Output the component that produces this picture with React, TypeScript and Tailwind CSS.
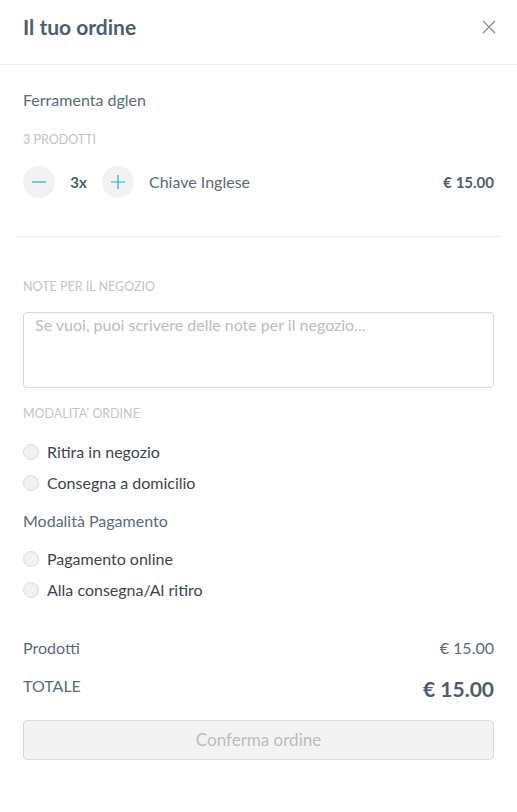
import { useState } from 'react';

const font = { fontFamily: 'Lato, "Open Sans", sans-serif' };

function Radio({ label, checked, onClick }: { label: string; checked: boolean; onClick: () => void }) {
  return (
    <button onClick={onClick} className="flex items-center gap-2 h-[31px] text-left">
      <span className="w-4 h-4 rounded-full border border-[#dcdcdc] bg-[#f0f1f3] shrink-0 flex items-center justify-center">
        {checked && <span className="w-2 h-2 rounded-full bg-[#17b6c9]" />}
      </span>
      <span className="text-[16px] text-[#3d4550]">{label}</span>
    </button>
  );
}

export default function App() {
  const [qty, setQty] = useState(3);
  const [mode, setMode] = useState<string | null>(null);
  const [pay, setPay] = useState<string | null>(null);

  return (
    <div style={font} className="w-[517px] h-[812px] bg-white text-[#5a6a7d]">
      <div className="h-[65px] border-b border-[#ececec] flex items-center justify-between pl-[23px] pr-[20px]">
        <h1 className="text-[21px] font-bold text-[#4d5d70] -mt-[10px]">Il tuo ordine</h1>
        <button className="-mt-[10px]">
          <svg width="16" height="16" viewBox="0 0 16 16" stroke="#8a8a8a" strokeWidth="1.3" fill="none">
            <path d="M2 2L14 14M14 2L2 14" />
          </svg>
        </button>
      </div>

      <div className="px-[23px] pt-[24px]">
        <p className="text-[16px] text-[#5a6a7d] leading-[22px]">Ferramenta dglen</p>
        <p className="mt-[21px] text-[12.5px] text-[#c4c4c4] leading-[16px]">{qty} PRODOTTI</p>
        <div className="mt-[18px] flex items-center h-[32px]">
          <button
            onClick={() => setQty((q) => Math.max(0, q - 1))}
            className="w-8 h-8 rounded-full bg-[#f1f2f4] flex items-center justify-center"
          >
            <svg width="16" height="16" viewBox="0 0 16 16" stroke="#17b6c9" strokeWidth="1.2">
              <path d="M1 8H15" />
            </svg>
          </button>
          <span className="w-[47px] text-center text-[15px] font-bold text-[#4d5d70]">{qty}x</span>
          <button
            onClick={() => setQty((q) => q + 1)}
            className="w-8 h-8 rounded-full bg-[#f1f2f4] flex items-center justify-center"
          >
            <svg width="16" height="16" viewBox="0 0 16 16" stroke="#17b6c9" strokeWidth="1.2">
              <path d="M1 8H15M8 1V15" />
            </svg>
          </button>
          <span className="ml-[15px] text-[16px] text-[#5a6a7d]">Chiave Inglese</span>
          <span className="ml-auto text-[15px] font-bold text-[#4d5d70]">€ 15.00</span>
        </div>
      </div>

      <div className="mx-[16px] mt-[38px] border-t border-[#ececec]" />

      <div className="px-[23px]">
        <p className="mt-[42px] text-[12.5px] text-[#c4c4c4] leading-[16px]">NOTE PER IL NEGOZIO</p>
        <textarea
          placeholder="Se vuoi, puoi scrivere delle note per il negozio..."
          className="mt-[17px] block w-full h-[76px] resize-none rounded-[4px] border border-[#dadada] px-[11px] py-0 text-[16px] text-[#3d4550] placeholder:text-[#bdbdbd] outline-none"
        />

        <p className="mt-[18px] text-[12.5px] text-[#c4c4c4] leading-[16px]">MODALITA' ORDINE</p>
        <div className="mt-[14px] flex flex-col">
          <Radio label="Ritira in negozio" checked={mode === 'ritiro'} onClick={() => setMode('ritiro')} />
          <Radio label="Consegna a domicilio" checked={mode === 'consegna'} onClick={() => setMode('consegna')} />
        </div>

        <p className="mt-[12px] text-[16px] text-[#5a6a7d] leading-[22px]">Modalità Pagamento</p>
        <div className="mt-[11px] flex flex-col">
          <Radio label="Pagamento online" checked={pay === 'online'} onClick={() => setPay('online')} />
          <Radio label="Alla consegna/Al ritiro" checked={pay === 'consegna'} onClick={() => setPay('consegna')} />
        </div>

        <div className="mt-[32px] flex items-center justify-between h-[22px]">
          <span className="text-[16px] text-[#5a6a7d]">Prodotti</span>
          <span className="text-[16px] text-[#5a6a7d]">€ 15.00</span>
        </div>
        <div className="mt-[16px] flex justify-between">
          <span className="text-[16px] text-[#5a6a7d] leading-[22px]">TOTALE</span>
          <span className="text-[21px] font-bold text-[#4d5d70] leading-[22px] mt-[3px]">€ 15.00</span>
        </div>

        <button
          disabled
          className="mt-[20px] w-full h-[40px] rounded-[4px] border border-[#dcdcdc] bg-[#f3f3f3] text-[17px] text-[#bcbcbc]"
        >
          Conferma ordine
        </button>
      </div>
    </div>
  );
}
